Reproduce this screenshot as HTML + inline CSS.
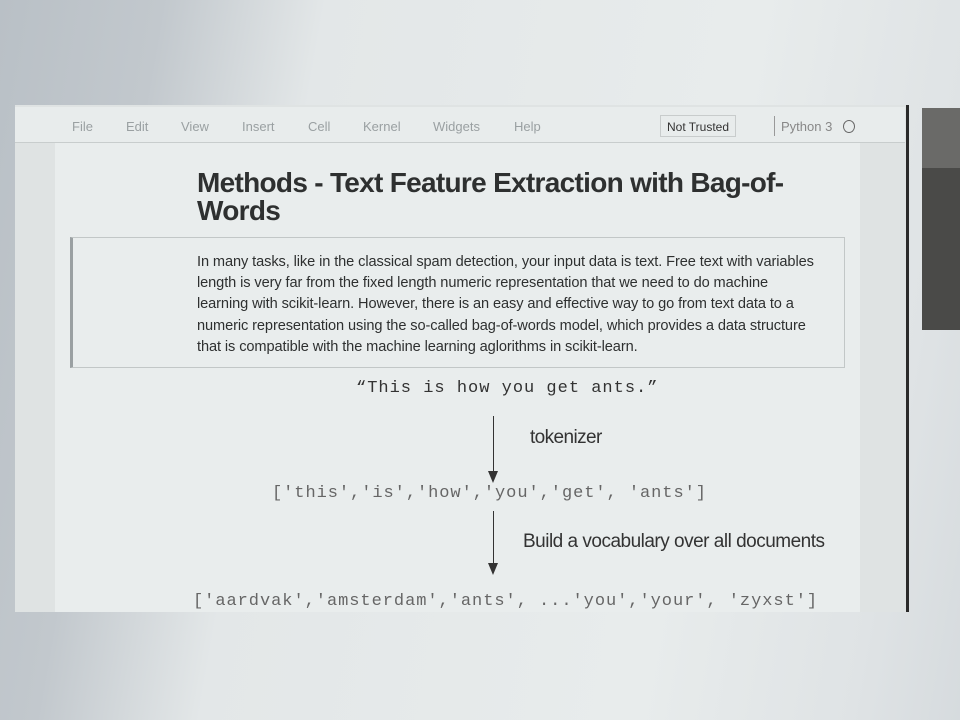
<!DOCTYPE html>
<html><head><style>
*{margin:0;padding:0;box-sizing:border-box}
body{width:960px;height:720px;overflow:hidden;position:relative;font-family:"Liberation Sans",sans-serif;
background:linear-gradient(100deg,#b9c0c6 0%,#c2c8cd 15%,#e3e7e8 30%,#e8ecec 70%,#dfe3e5 90%,#d6dbde 100%)}
.abs{position:absolute}
.screen{left:15px;top:105px;width:892px;height:507px;background:#dfe3e3}
.tb{left:15px;top:107px;width:890px;height:36px;background:#e8ecec;border-bottom:1px solid #c8cdcd}
.menu{top:119px;font-size:13px;color:#9aa0a2}
.nb{left:55px;top:143px;width:805px;height:469px;background:#e9eded}
.vline{left:906px;top:105px;width:3px;height:507px;background:#2a2a2a}
.dark{left:922px;top:108px;width:38px;height:222px;background:#4a4a48}
.dark2{left:922px;top:108px;width:38px;height:60px;background:#6a6a68}
h1{left:197px;top:169px;font-size:28px;line-height:28px;font-weight:bold;color:#2e3030;letter-spacing:-0.7px;white-space:nowrap}
.box{left:70px;top:237px;width:775px;height:131px;border:1px solid #c2c7c7;border-left:3px solid #9aa0a2}
.p{left:197px;top:252px;font-size:14.6px;line-height:21.2px;color:#2e3030;white-space:nowrap;letter-spacing:-0.1px}
.mono{font-family:"Liberation Mono",monospace;white-space:pre}
.arrow{width:1px;background:#333}
.head{width:0;height:0;border-left:5px solid transparent;border-right:5px solid transparent;border-top:12px solid #333}
</style></head><body>
<div class="abs screen"></div>
<div class="abs tb"></div>
<div class="abs menu" style="left:72px">File</div>
<div class="abs menu" style="left:126px">Edit</div>
<div class="abs menu" style="left:181px">View</div>
<div class="abs menu" style="left:242px">Insert</div>
<div class="abs menu" style="left:308px">Cell</div>
<div class="abs menu" style="left:363px">Kernel</div>
<div class="abs menu" style="left:433px">Widgets</div>
<div class="abs menu" style="left:514px">Help</div>
<div class="abs" style="left:660px;top:115px;width:76px;height:22px;border:1px solid #c8cccc;font-size:12px;color:#333;padding:4px 0 0 6px">Not Trusted</div>
<div class="abs" style="left:774px;top:116px;width:1px;height:20px;background:#999"></div>
<div class="abs" style="left:781px;top:119px;font-size:13px;color:#888">Python 3</div>
<div class="abs" style="left:843px;top:120px;width:12px;height:13px;border:1.5px solid #666;border-radius:50%"></div>
<div class="abs nb"></div>
<div class="abs vline"></div>
<div class="abs dark"></div>
<div class="abs dark2"></div>
<h1 class="abs">Methods - Text Feature Extraction with Bag-of-<br>Words</h1>
<div class="abs box"></div>
<div class="abs p">In many tasks, like in the classical spam detection, your input data is text. Free text with variables<br>length is very far from the fixed length numeric representation that we need to do machine<br>learning with scikit-learn. However, there is an easy and effective way to go from text data to a<br>numeric representation using the so-called bag-of-words model, which provides a data structure<br>that is compatible with the machine learning aglorithms in scikit-learn.</div>
<div class="abs mono" style="left:356px;top:379px;font-size:17px;color:#333;letter-spacing:1.0px">“This is how you get ants.”</div>
<div class="abs arrow" style="left:493px;top:416px;height:58px"></div>
<div class="abs head" style="left:488px;top:471px"></div>
<div class="abs" style="left:530px;top:427px;font-size:19px;color:#333;letter-spacing:-0.6px">tokenizer</div>
<div class="abs mono" style="left:272px;top:484px;font-size:17px;color:#666;letter-spacing:0.95px">['this','is','how','you','get', 'ants']</div>
<div class="abs arrow" style="left:493px;top:511px;height:55px"></div>
<div class="abs head" style="left:488px;top:563px"></div>
<div class="abs" style="left:523px;top:531px;width:310px;overflow:hidden;font-size:19px;color:#333;letter-spacing:-0.5px;white-space:nowrap">Build a vocabulary over all documents</div>
<div class="abs mono" style="left:193px;top:592px;font-size:17px;color:#666;height:20px;overflow:hidden;letter-spacing:0.96px">['aardvak','amsterdam','ants', ...'you','your', 'zyxst']</div>
</body></html>
